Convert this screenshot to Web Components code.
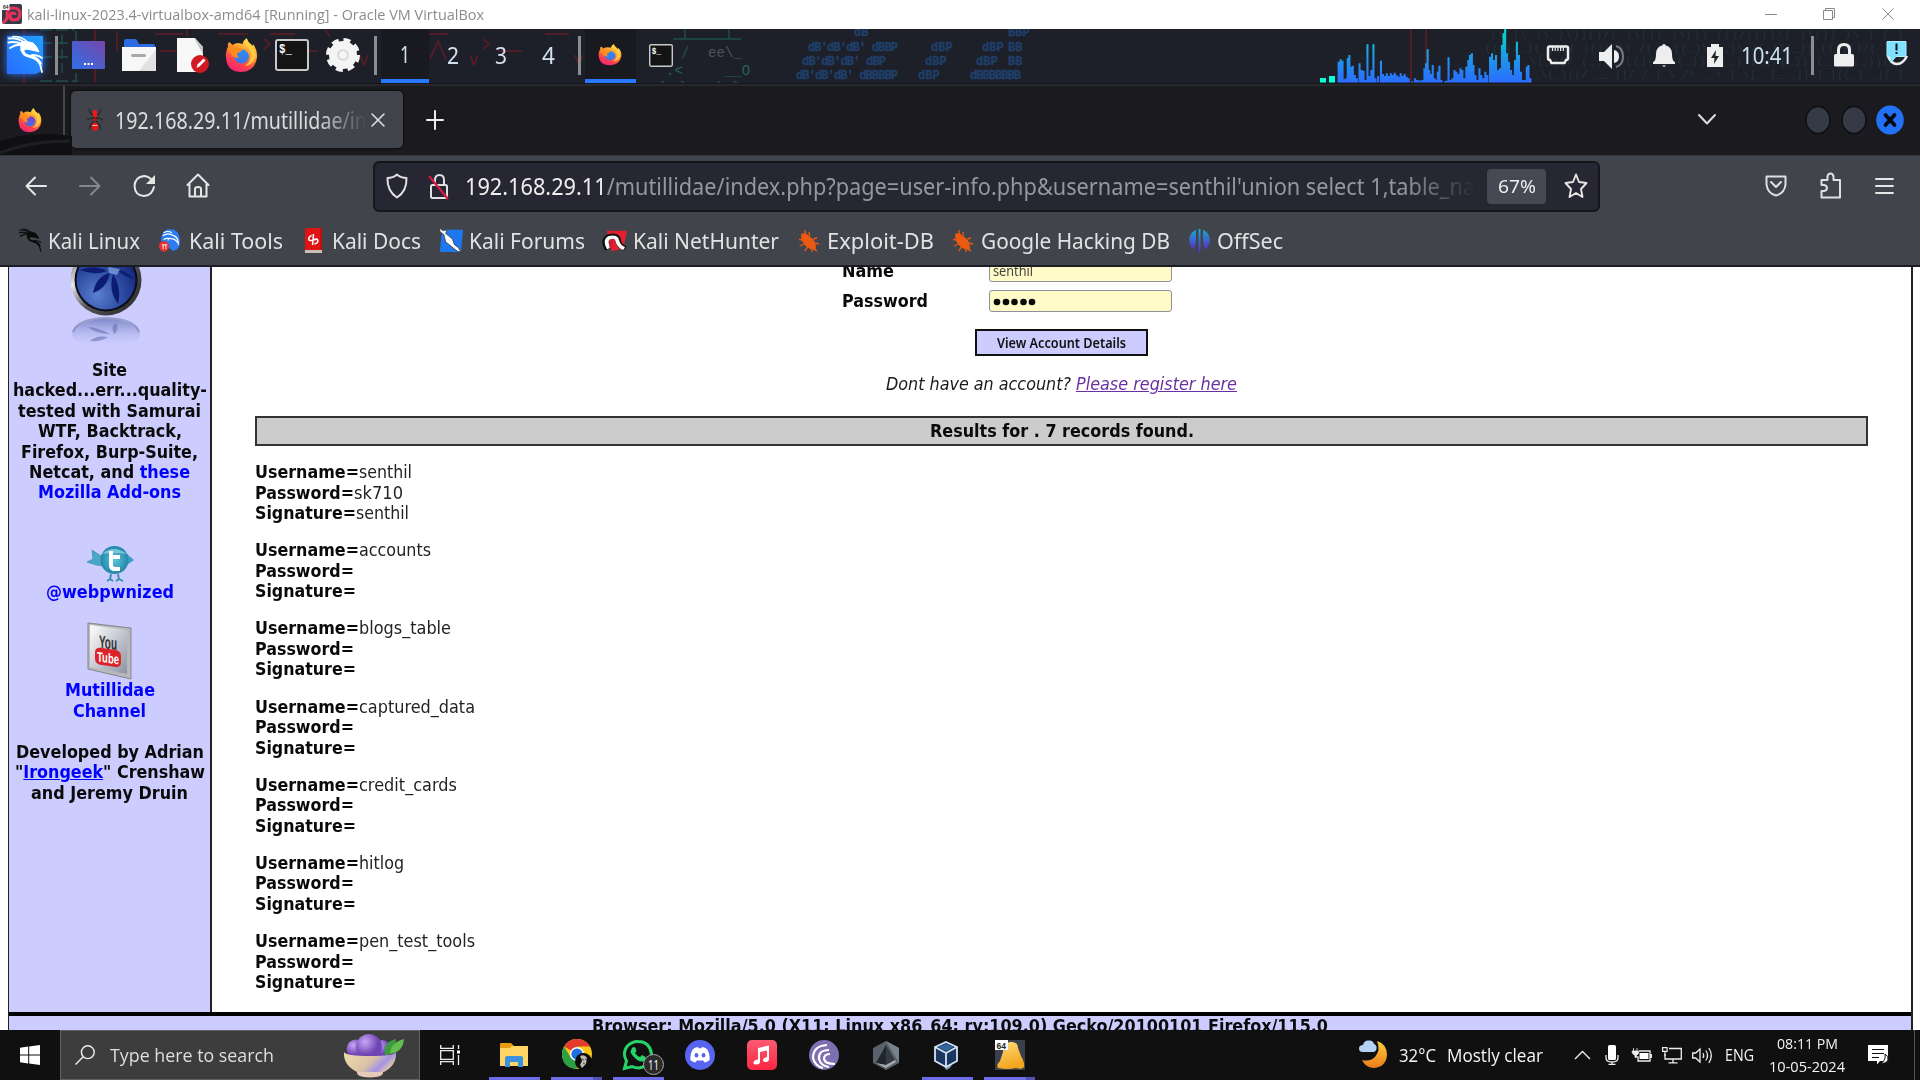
<!DOCTYPE html>
<html lang="en">
<head>
<meta charset="utf-8">
<title>kali-linux-2023.4-virtualbox-amd64 [Running] - Oracle VM VirtualBox</title>
<style>
html,body{margin:0;padding:0;width:1920px;height:1080px;overflow:hidden;background:#fff}
</style>
</head>
<body>
<vm-desktop></vm-desktop>
<script>
const FOX = `<defs><linearGradient id="a" x1=".8" y1="0" x2=".3" y2="1"><stop offset="0" stop-color="#fff04a"/><stop offset=".4" stop-color="#ff9a2c"/><stop offset=".75" stop-color="#ff3f4d"/><stop offset="1" stop-color="#f0247a"/></linearGradient><linearGradient id="b" x1="0" y1="0" x2="0" y2="1"><stop offset="0" stop-color="VAR"/><stop offset="1" stop-color="#3d74e8"/></linearGradient></defs>
<path fill="url(#a)" d="M3 9Q2 6 4 4q2 1 3 3 3-2 6-2l4 1Q18 2 21 0q1 4 5 7l1 1V6q5 6 4 14-2 13-15 14Q2 34 1 20 0 13 3 9Z"/>
<circle cx="16" cy="18.500" r="7.200" fill="url(#b)"/><path fill="#ff8d1c" d="M2 10q3-3 7-1 4 1 8 2-1 3-5 4-1 3 2 5-6 0-8-4Z"/><path fill="#ffcf44" opacity=".85" d="M19 2q0 5 4 8 3 4 2 9-1 6-6 9 10-1 11-11-1-6-5-10-4-2-6-5Z"/>`;
const DRAGON = `<g fill="none" stroke="FILL" stroke-linecap="round" stroke-linejoin="round"><path stroke-width="2" d="M3 3.500Q10 2 18 7M2.500 7.500Q9 6 16 9M4 13q6-4 12-3"/><path stroke-width="1.500" d="M7 1.500q9 0 14 5"/><path fill="FILL" stroke-width="1" d="M16 6.500q6-.5 11 1.500 4 3 6 9l-3-1-7-1.500q-5-1-5.500 2L15 16q-1-6 1-9.500Z"/><path stroke-width="3" d="M16.300 14q0 6 8 7.500 7 1.500 10 7"/><path stroke-width="1.800" d="M24 21q8 2 10 8l2 8M26 20q6 0 10 3"/></g>`;
const TERM = `<rect x="1" y="1" width="32" height="30" rx="2" fill="#141414" stroke="#c9c9c9" stroke-width="2"/><text x="4" y="14" font-family="Liberation Mono" font-weight="bold" font-size="12" textLength="13" lengthAdjust="spacingAndGlyphs" fill="#fff">$_</text>`;
const BUG = `<g transform="translate(1 1)"><path d="M3 4q4-1 7 2l5 4q3 4 2 9l2 2-5-2q-6-1-9-6-3-4-2-9Z" fill="#ec5a12" stroke="#ec5a12"/><path d="M7 4L6 0M11 6l-.5-4M15 9l4-1M17 13l4 1M4 10l-4-.5M6 14l-5 2M9 17l-3 4M13 19l1 3" stroke="#ec5a12" stroke-width="1.300" fill="none"/></g>`;
const L='fill="none" stroke-linecap="round" stroke-linejoin="round"';
const ICONS = {
vbox:['0 0 20 20',`<rect width="20" height="20" rx="2" fill="#363b48"/><path d="M1 19Q7 14 5 10 5 4 11 4q7 0 7 6 0 6-6 6-4 0-4-4 0-3 3-3 2 0 2 2" fill="none" stroke="#e8315a" stroke-width="3.2"/><rect width="7.500" height="6" fill="#fff"/><text x="1" y="5" font-size="5" font-weight="bold" font-family="Liberation Sans" fill="#222">64</text>`],
kali:['0 0 38 40',`<defs><linearGradient id="g" x1="0" y1="1" x2="1" y2="0"><stop offset="0" stop-color="#2a6cff"/><stop offset="1" stop-color="#20a0ff"/></linearGradient></defs><path d="M1 1h36v30q-2 8-10 8H1Z" fill="url(#g)"/>`+DRAGON.replaceAll('FILL','#fff')],
desk:['0 0 33 28',`<defs><linearGradient id="g" x1="0" y1="1" x2="1" y2="0"><stop offset="0" stop-color="#2e70ea"/><stop offset="1" stop-color="#7746a8"/></linearGradient></defs><rect width="33" height="28" rx="1" fill="url(#g)"/><path d="M12 23h2m1.500 0h2m1.500 0h2" stroke="#fff" stroke-width="2"/>`],
folder:['0 0 34 32',`<path d="M2 12V2q0-2 2-2h9q2 0 3 3l1 2h14q2 0 2 2v5Z" fill="#2c6be4"/><path d="M0 8h34v24H0Z" fill="#f7f7f7"/><path d="M34 10v22H17Z" fill="#e2e2e2"/><rect x="9" y="15" width="15" height="3" rx="1.500" fill="#a9a9a9"/>`],
doc:['0 0 32 35',`<path d="M0 0h18l8 9v25H0Z" fill="#f8f8f8"/><path d="M17 0l9 16v-7Z" fill="#c2c2c2"/><circle cx="23" cy="26" r="9" fill="#d01a22"/><path d="M19.500 30l1-3.500 6-6 2 2-6 6Z" fill="#fff"/>`],
fox:['0 0 32 35',FOX.replace('VAR','#2f8ef0')],
foxv:['0 0 32 35',FOX.replace('VAR','#8a35d8')],
term:['0 0 34 32',TERM],
gear:['0 0 34 36',`<circle cx="17" cy="18" r="9.500" fill="none" stroke="#f4f4f4" stroke-width="9"/><circle cx="17" cy="18" r="14" fill="none" stroke="#f4f4f4" stroke-width="6" stroke-dasharray="6.500 4.500"/><circle cx="17" cy="18" r="5" fill="#f4f4f4" stroke="#cfcfcf" stroke-width="1.200"/>`],
eth:['0 0 22 20',`<path d="M2.500 1.500h17q1.500 0 1.500 1.500v10q0 2-2 2l-1.500 3h-13L3 15q-2 0-2-2V3q0-1.500 1.500-1.500Z" fill="none" stroke="#eee" stroke-width="2.500"/><path d="M5.500 2v4m2.700-4v4m2.700-4v4m2.700-4v4m2.700-4v4" stroke="#eee" stroke-width="1.200"/>`],
vol:['0 0 27 25',`<path d="M0 8h5l8-8v25l-8-8H0Z" fill="#eee"/><path d="M15 6q5 1 5 6.500T15 19Z" fill="#eee"/><path d="M17 2q7 2 7 10.500T17 23" fill="none" stroke="#777c84" stroke-width="2"/>`],
bell:['0 0 22 23',`<path d="M11 0q1.500 0 1.800 1.500Q19 3 19 10q0 7 3 8v2H0v-2q3-1 3-8 0-7 6.200-8.500Q9.500 0 11 0ZM9 21.500h4l-2 1.500Z" fill="#eee"/>`],
bat:['0 0 16 23',`<path d="M4 0h8v3h4v20H0V3h4Z" fill="#eee"/><path d="M9 6l-5 8h3.500L7 20l5-8H8.500Z" fill="#20222c"/>`],
lock:['0 0 20 24',`<path d="M4.500 12V7q0-5.500 5.500-5.500T15.500 7v5" fill="none" stroke="#eee" stroke-width="3"/><rect y="11" width="20" height="12.500" rx="1.500" fill="#eee"/>`],
msg:['0 0 24 25',`<path d="M3 15q3 8 9 8 6 0 10-8" fill="none" stroke="#eee" stroke-width="2.500"/><path d="M2 .5h19v15h-10l-5 6-1-6H2Z" fill="#7fe0ff" stroke="#aaf0ff"/><path d="M11.500 2.500v7m0 1.500v2" stroke="#111" stroke-width="2"/>`],
min:['0 0 12 12',`<path d="M0 6.500h12" stroke="#8a8a8a"/>`],
restore:['0 0 12 12',`<path d="M.5 2.500h9v9h-9ZM2.500 2.500v-2h9v9h-2" fill="none" stroke="#8a8a8a"/>`],
close:['0 0 12 12',`<path d="M.5.500l11 11m0-11l-11 11" stroke="#8a8a8a"/>`],
ant:['0 0 18 24',`<path d="M3 1l2 5 3 2m7-7l-2 5-3 2M1 12l4-2h8l4 2M3 22l2-6 3-3m7 9l-2-6-3-3" fill="none" stroke="#1c1c1f" stroke-width="1"/><rect x="7" y="2" width="4" height="7" rx="1.500" fill="#f11"/><circle cx="9" cy="11.500" r="1.800" fill="#b11"/><path d="M9 14.500q4 .5 3.500 5-1.500 3.500-3.500 3.500t-3.500-3.500q-.5-4.500 3.500-5Z" fill="#e01616"/><path d="M6.500 17.500h5" stroke="#fbb" stroke-width="1"/>`],
x:['0 0 14 14',`<path d="M1 1l12 12M13 1L1 13" ${L} stroke="#ddd" stroke-width="1.600"/>`],
plus:['0 0 18 20',`<path d="M9 1v18M1 10h16" ${L} stroke="#eee" stroke-width="2"/>`],
chev:['0 0 18 11',`<path d="M1 1l8 8.500L17 1" ${L} stroke="#ddd" stroke-width="2"/>`],
wdot:['0 0 26 28',`<ellipse cx="13" cy="14" rx="12" ry="13.500" fill="#363a46" stroke="#0e0f12" stroke-width="1.500"/>`],
wclose:['0 0 28 30',`<ellipse cx="14" cy="15" rx="13.800" ry="14.600" fill="#2372f5"/><path d="M9.500 10l9 10m0-10l-9 10" stroke="#0a0a12" stroke-width="3.800" stroke-linecap="round"/>`],
back:['0 0 22 20',`<path d="M21 10H1.500M10 1.500L1.500 10l8.500 8.500" ${L} stroke="#e6e6e6" stroke-width="2"/>`],
fwd:['0 0 22 20',`<path d="M1 10h19.500M12 1.500l8.500 8.500-8.500 8.500" ${L} stroke="#85878c" stroke-width="2"/>`],
reload:['0 0 23 24',`<path d="M18.500 5.500Q15 2 11 2 2 3 1.500 12 2 21.500 11 22q8-.5 10-9" ${L} stroke="#e6e6e6" stroke-width="2"/><path d="M22 1v9h-9Z" fill="#e6e6e6"/>`],
home:['0 0 24 25',`<path d="M1.500 12L12 1.500 22.500 12M3.500 11v12.500h17V11M9 23v-7q0-2 3-2t3 2v7" ${L} stroke="#e6e6e6" stroke-width="2"/>`],
shield:['0 0 22 26',`<path d="M11 1.500q4 3.500 9.500 3.500.5 13-9.500 19.500Q1 18 1.500 5 7 5 11 1.500Z" ${L} stroke="#e0e0e0" stroke-width="2"/>`],
nolock:['0 0 22 27',`<path d="M7 12V7q0-5 4.500-5T16 7v5" ${L} stroke="#e0e0e0" stroke-width="2"/><rect x="3" y="12" width="16" height="13" rx="1.500" ${L} stroke="#e0e0e0" stroke-width="2"/><path d="M1 3l19 23" stroke="#d41b45" stroke-width="2.300"/>`],
star:['0 0 24 26',`<path d="M12 1.500l3 7.500 7.500 1-5.500 6 1.500 8-6.500-4-6.500 4L7 16 1.500 10 9 9Z" ${L} stroke="#e6e6e6" stroke-width="1.900"/>`],
pocket:['0 0 22 22',`<path d="M1.500 1.500h19v8q-1 9-9.500 11-8.500-2-9.500-11ZM6 7l5 5 5-5" ${L} stroke="#e0e0e0" stroke-width="2"/>`],
puzzle:['0 0 22 27',`<path d="M1.500 8h6V4.500Q8 1.500 10.500 1.500t3 3V8h6.500v17.500H1.500V19H4q3-.5 3-3t-3-3H1.500Z" ${L} stroke="#e0e0e0" stroke-width="2"/>`],
menu:['0 0 19 18',`<path d="M1 2h17M1 9h17M1 16h17" ${L} stroke="#e6e6e6" stroke-width="1.900"/>`],
bkali:['0 0 38 40',DRAGON.replaceAll('FILL','#0b0b0b')],
btools:['0 0 24 26',`<path d="M12 1q10 0 11 12 0 10-8 11L2 13Q3 1 12 1Z" fill="#2c7cf2"/><path d="M4 8q6-4 12 0 5 2 5 8-3-5-8-5-3-1-3 2M5 5q5-3 9 0M5 12q3-2 6-1" fill="none" stroke="#fff" stroke-width="1.300"/><circle cx="5.500" cy="19" r="5.600" fill="#e8302e"/><path d="M3 17.500h6M4.500 17.500V22m3-4.500V22" stroke="#fff"/>`],
bdocs:['0 0 20 26',`<path d="M1 3q0-3 3-3h15v22H1Z" fill="#e01414"/><path d="M1 22h18v3H1Z" fill="#c9c0b8"/><path d="M8 7.500q-3 1-3 3.500t5 1q4-2 4.500.5T11 16M10 6l-1 11" fill="none" stroke="#fff" stroke-width="1.600"/><path d="M18 0v22" stroke="#b01010" stroke-width="1.500"/>`],
bforum:['0 0 26 27',`<path d="M3 2h22l-2 24H1Z" fill="#1e77ee"/><path d="M1 0l3 3 4-1-1 4 7 6 2 6 4 3 3 5-4-1-6-5-6-5-2-8-4-3Z" fill="#fff" stroke="#333" stroke-width=".8"/>`],
bnet:['0 0 26 27',`<path d="M4 2h21l-4 21-12 3Z" fill="#e3202e"/><path d="M5 24Q-1 13 6 9q9-3 10 5 0 5 7 9" fill="none" stroke="#111" stroke-width="6"/><path d="M6 23Q1 13 7 10q7-2 8 4 1 6 7 9" fill="none" stroke="#fff" stroke-width="4"/><path d="M8 22q-1-7 2-8" fill="none" stroke="#d31836" stroke-width="2.500"/>`],
bug:['0 0 22 24',BUG],
boff:['0 0 23 28',`<defs><linearGradient id="g" x1="0" y1="0" x2="0" y2="1"><stop offset="0" stop-color="#1aa7c8"/><stop offset="1" stop-color="#5b2bd0"/></linearGradient></defs><path d="M8 2q-7 4-7 12 1 7 5 10l2-9Zm7 0q7 4 7 12-1 7-5 10l-2-9Z" fill="url(#g)"/><path d="M10.500 1v24l1 3 1-3V1Z" fill="url(#g)"/>`],
logo:['0 0 80 83',`<defs><linearGradient id="m" x1="0" y1="0" x2="1" y2="1"><stop offset="0" stop-color="#333"/><stop offset=".3" stop-color="#e8e8e8"/><stop offset=".55" stop-color="#555"/><stop offset="1" stop-color="#222"/></linearGradient><radialGradient id="n" cx=".35" cy=".75" r=".9"><stop offset="0" stop-color="#5b7fd0"/><stop offset=".5" stop-color="#2b49a0"/><stop offset="1" stop-color="#0a1766"/></radialGradient><linearGradient id="r" x1="0" y1="0" x2="0" y2="1"><stop offset="0" stop-color="#6675b8" stop-opacity=".75"/><stop offset="1" stop-color="#ccccff" stop-opacity="0"/></linearGradient></defs>
<circle cx="40" cy="13" r="35.500" fill="url(#m)"/><circle cx="40" cy="13" r="31.500" fill="#0a0c1c"/><circle cx="40" cy="13" r="29.500" fill="url(#n)"/><path d="M44 6q-14 3-17 20 14-5 17-20Zm3 1q-5 16 5 30 4-16-5-30ZM41 4Q28-3 14 3q14 6 27 1Zm10-1q9 0 17 9-9-2-17-9Z" fill="#0c1c72"/><path d="M42 0l12 2-3 6-8-2Z" fill="#7c9cdc" opacity=".8"/><ellipse cx="40" cy="67" rx="34" ry="15" fill="url(#r)"/><path d="M7 65q4-13 33-14 29 1 33 14" fill="none" stroke="#777aa8" stroke-width="2" opacity=".6"/><path d="M44 67q-10-6-22-7 8 7 22 7Zm4 0q-4-8 2-11 4 7-2 11ZM42 70q-12-2-18 4 11 1 18-4Z" fill="#6672b0" opacity=".6"/>`],
bird:['0 0 48 37',`<defs><radialGradient id="g"><stop offset="0" stop-color="#5bc6dd"/><stop offset="1" stop-color="#2487ab"/></radialGradient></defs><path d="M6 5l12 8-1 8q-9-1-16-4l6-3Z" fill="#4aa7c6" stroke="#2f8fae" stroke-width=".7"/><path d="M41 9l7 6-7 5Z" fill="#3a9fc0"/><path d="M25 29l-1 6m-3 1l3-2 3 2m5-7l1 6m-3 1l3-2 4 2" fill="none" stroke="#2f8fae" stroke-width="1.800"/><circle cx="28.500" cy="15" r="14" fill="url(#g)"/><path d="M16 9q11-10 25 0-12-2-25 0Z" fill="#a5e2ee" opacity=".6"/><path d="M25 6v14q0 4 4 4h5M25 12h9" fill="none" stroke="#fff" stroke-width="4"/>`],
yt:['0 0 45 57',`<defs><linearGradient id="g" x1="0" y1="0" x2="1" y2="1"><stop offset="0" stop-color="#fff"/><stop offset="1" stop-color="#8c93a2"/></linearGradient></defs><path d="M1 1l43 5v51L1 47Z" fill="#b9b9bd" stroke="#85858c"/><path d="M3 3l37 5v44L3 45Z" fill="url(#g)"/><g transform="skewY(8)"><text x="12" y="24" font-family="Liberation Sans Narrow,Liberation Sans" font-weight="bold" font-size="18" textLength="18" lengthAdjust="spacingAndGlyphs" fill="#333">You</text><rect x="8" y="24" width="26" height="17" rx="5" fill="#dd2229"/><text x="10" y="38" font-family="Liberation Sans" font-weight="bold" font-size="14" textLength="22" lengthAdjust="spacingAndGlyphs" fill="#fff">Tube</text></g>`],
win:['0 0 20 20',`<path d="M0 2.800l8.200-1.200v7.900H0Zm9.200-1.300L20 0v9.500H9.200ZM0 10.500h8.200v7.900L0 17.200Zm9.200 0H20V20L9.200 18.500Z" fill="#fff"/>`],
search:['0 0 20 20',`<circle cx="12.800" cy="7.200" r="6.400" fill="none" stroke="#eee" stroke-width="1.400"/><path d="M8.200 11.800L.5 19.500" stroke="#eee" stroke-width="1.400"/>`],
bowl:['0 0 60 44',`<defs><radialGradient id="p" cx=".35" cy=".3"><stop offset="0" stop-color="#c8a8f4"/><stop offset="1" stop-color="#6f45b4"/></radialGradient><linearGradient id="q" x1="0" y1="0" x2="1" y2=".4"><stop offset="0" stop-color="#efdcab"/><stop offset=".6" stop-color="#d9c2a6"/><stop offset=".85" stop-color="#a493e6"/><stop offset="1" stop-color="#d9bfae"/></linearGradient></defs><circle cx="12" cy="15" r="9.500" fill="url(#p)"/><circle cx="38" cy="15" r="9" fill="url(#p)"/><path d="M41 21Q38 8 52 5q0 12-8 16Z" fill="#3d9b3f"/><path d="M46 20q0-11 14-15-1 13-14 15Z" fill="#62bf4e"/><circle cx="25" cy="13" r="13" fill="url(#p)"/><path d="M0 18q2 4 26 4t26-4q1 13-12 20H13Q-1 31 0 18Z" fill="url(#q)"/><path d="M13 38h26q1 5-13 5.500Q12 43 13 38Z" fill="#e7c9b8"/>`],
task:['0 0 20 20',`<path d="M.7 0v3.300h12.600V0M.7 20v-3.300h12.600V20M.7 5.700h12.600v8.600H.7Z" fill="none" stroke="#eee" stroke-width="1.300"/><path d="M18.500 0v4m0 6v10" stroke="#eee" stroke-width="1.300"/><rect x="17" y="5.500" width="3" height="3" fill="#fff"/>`],
files:['0 0 28 24',`<path d="M0 1q0-1 1-1h10l3 3v6H0Z" fill="#e79c12"/><path d="M0 5h10l2-2h16v20H0Z" fill="#ffd565"/><path d="M5 24V15q0-2 2-2h14q2 0 2 2v9h-5v-5h-8v5Z" fill="#3a92dc"/>`],
chrome:['0 0 30 32',`<circle cx="15" cy="15" r="15" fill="#fbc618"/><path d="M15 15L2 7.500Q6 0 15 0t13 7.500H15Z" fill="#e33b2e"/><path d="M2 7.500L9 19l6 3v8Q0 29 0 15 0 11 2 7.500Z" fill="#2b9e46"/><circle cx="15" cy="15" r="7" fill="#fff"/><circle cx="15" cy="15" r="5.600" fill="#1f6fe0"/><circle cx="21.500" cy="22.500" r="8.500" fill="#0b0b0b"/><path d="M18 17q5-2 7 2l-1 6-4 4-2-3 2-4Z" fill="#bdb8b0"/><path d="M19 20l3 1m1-1l2 1m-4 3l2 1" stroke="#444"/>`],
wa:['0 0 41 35',`<path d="M1.500 28.500l2-7.500Q-1 13 4 6.500 9 1 15.500 1.500 27 2 28.500 14 28 26 16 28q-4 0-7-1.500Z" fill="#101010" stroke="#25d366" stroke-width="3"/><path d="M9 8q2-2 3.500 0l1 3-1.500 2q2 3 5 4l2-2 3.500 2q1 3-3 4.500-4 .5-8-4-4-4-4-6Z" fill="#25d366"/><circle cx="30.500" cy="24.500" r="10" fill="#2a2a2a" stroke="#a5a5a5"/><text x="30.500" y="30" text-anchor="middle" font-family="Open Sans" font-size="15" textLength="11" lengthAdjust="spacingAndGlyphs" fill="#fff">11</text>`],
discord:['0 0 30 30',`<circle cx="15" cy="15" r="15" fill="#5865f2"/><path d="M8 9q3-2 5-2l.7 1.200h2.600L17 7q2 0 5 2 3 5 2.700 11-3 2.300-5.200 2.500L18.200 20.500h-6.400L10.500 22.500Q8 22.300 5.300 20 5 14 8 9Z" fill="#fff"/><ellipse cx="11.500" cy="15.300" rx="1.900" ry="2.200" fill="#5865f2"/><ellipse cx="18.500" cy="15.300" rx="1.900" ry="2.200" fill="#5865f2"/>`],
music:['0 0 30 30',`<defs><linearGradient id="g" x1="0" y1="0" x2="0" y2="1"><stop offset="0" stop-color="#fc5b73"/><stop offset="1" stop-color="#fa2741"/></linearGradient></defs><rect width="30" height="30" rx="5" fill="url(#g)"/><path d="M11 8l11-2.500v13.500q0 3-3 3t-3-2 4-3V10.500l-7 1.500v9.500q0 3-3.500 3t-3-2.300Q7 20 11 19.500Z" fill="#fff"/>`],
bt:['0 0 30 30',`<circle cx="15" cy="15" r="15" fill="#7d6fb0"/><path d="M18 5Q4 6 4 18q2 8 10 10M20 10q-11 0-10 9 2 7 10 8M21 14q-6 0-6 5 1 5 11 5" fill="none" stroke="#fff" stroke-width="2.200"/>`],
hex:['0 0 26 29',`<path d="M13 0l13 7v15l-13 7L0 22V7Z" fill="#59616a"/><path d="M13 0l13 7v15L13 0Z" fill="#78828b"/><path d="M13 4L3 22l10 2Z" fill="#20262c"/><path d="M13 4l9 15-9 5Z" fill="#343b42"/><path d="M3 22l10 2 9-5 1 2-10 6Z" fill="#a2abb2"/>`],
vb:['0 0 24 29',`<path d="M7 19l5 10q7-2 6-10Z" fill="#7f95b4"/><path d="M12 1l11 5v14l-11 6L1 20V6Z" fill="#18365f" stroke="#d4e2f2" stroke-width="1.800"/><path d="M1 6l11 6 11-6M12 12v14" fill="none" stroke="#d4e2f2" stroke-width="1.800"/><path d="M12 3l8 3-8 4-8-4Z" fill="#31669f"/>`],
vm:['0 0 30 30',`<defs><linearGradient id="g" x1="0" y1="0" x2=".3" y2="1"><stop offset="0" stop-color="#ffdc78"/><stop offset="1" stop-color="#f3a51e"/></linearGradient></defs><rect width="30" height="30" fill="#3a3f4b"/><path d="M3 28q-2-3 2-7l3-9q0-9 7-10 8-1 8 6l3 8q4 7 3 11-2 3-8 1-8 2-18 0Z" fill="url(#g)"/><rect width="13" height="10" fill="#fff"/><text x="1.500" y="8.500" font-family="Liberation Sans" font-weight="bold" font-size="8.500" fill="#222">64</text>`],
moon:['0 0 28 29',`<defs><linearGradient id="g" x1="0" y1="0" x2="0" y2="1"><stop offset="0" stop-color="#fbcf3c"/><stop offset="1" stop-color="#ee7a1b"/></linearGradient></defs><path d="M18 1q10 3 10 14-1 12-13 13-8 0-12-8 8 2 13-3 6-7 2-16Z" fill="url(#g)"/><path d="M4 12q-4 0-4-3.500Q0 5 4 5q1-5 6-4.500Q14 0 15 4q3 1 2.500 4.500T14 12Z" fill="#b5d2f4"/>`],
up:['0 0 17 10',`<path d="M1 9l7.500-7.500L16 9" fill="none" stroke="#eee" stroke-width="1.400"/>`],
mic:['0 0 14 20',`<rect x="3" width="8" height="15" rx="1.500" fill="#fff"/><path d="M1 10v3q0 4 6 4t6-4v-3M7 17v2.300M3.500 19.300h7" fill="none" stroke="#eee" stroke-width="1.300"/>`],
wbat:['0 0 20 14',`<path d="M7.500 5h9v6h-9Z" fill="#fff"/><path d="M7 3h11v10H6V8M19.300 6v4" fill="none" stroke="#eee" stroke-width="1.300"/><path d="M1.500 0v3M5 0v3M0 3h6.500v2.500L4.500 7.500v2H3v-2L.6 5.500Z" fill="#eee" stroke="#eee" stroke-width=".8"/>`],
net:['0 0 20 17',`<path d="M7 1.500h12.300v10.500H3V7M11 12v3.500M6.500 15.800h9" fill="none" stroke="#eee" stroke-width="1.300"/><path d="M.6.600h4.500v3.800H.6ZM3 4.500V9" fill="none" stroke="#eee" stroke-width="1.200"/>`],
wvol:['0 0 21 17',`<path d="M.7 6h3L8 2v13l-4.300-4h-3Z" fill="none" stroke="#eee" stroke-width="1.300"/><path d="M11 6q1.500 2.500 0 5M13.800 3.500q3.500 5 0 10M16.800 1q5 7.500 0 15" fill="none" stroke="#eee" stroke-width="1.200"/>`],
note:['0 0 21 20',`<path d="M0 0h20v16h-8l-3 3.500V16H0Z" fill="#fff"/><path d="M4 4.500h12M4 8.500h12M4 12.500h7" stroke="#101010" stroke-width="1.200"/><path d="M17 9q4 2 3 6-2 4-7 3 5-2 4-9Z" fill="#fff" stroke="#101010"/>`]
};
const def=(n,html,extra)=>{const t=document.createElement('template');t.innerHTML=html;
 customElements.define(n,class extends HTMLElement{constructor(){super();this.attachShadow({mode:'open'}).append(t.content.cloneNode(true));}
 connectedCallback(){extra&&extra(this);}});};

/* u-icon: inline drawing. n = name, w/h = size, m = left margin, t = vertical nudge */
def('u-icon','<style>:host{display:block;flex:none}svg{display:block;width:100%;height:100%;overflow:visible}</style><div style="height:100%"></div>',e=>{
 const [vb,s]=ICONS[e.getAttribute('n')],v=vb.split(' ');
 e.style.width=(e.getAttribute('w')||v[2])+'px';e.style.height=(e.getAttribute('h')||v[3])+'px';
 e.style.marginLeft=(e.getAttribute('m')||0)+'px';
 if(e.hasAttribute('t'))e.style.marginTop=e.getAttribute('t')+'px';
 e.shadowRoot.querySelector('div').innerHTML=`<svg viewBox="${vb}" preserveAspectRatio="none">${s}</svg>`;
});
/* fit-text: one line of text condensed or widened to w pixels */
def('fit-text','<style>:host{display:block;flex:none;white-space:pre}span{display:inline-block;transform-origin:0 50%}</style><span><slot></slot></span>',e=>{
 const s=e.shadowRoot.querySelector('span'),w=+e.getAttribute('w');
 e.style.marginLeft=(e.getAttribute('m')||0)+'px';
 if(e.hasAttribute('s'))e.style.fontSize=e.getAttribute('s')+'px';
 const n=s.getBoundingClientRect().width;
 e.style.width=w+'px';
 if(n)s.style.transform=`scaleX(${w/n})`;
});

def('title-bar',`<style>:host{display:flex;height:29px;background:#fff;align-items:center;color:#8b8b8b;font:15px "Open Sans",sans-serif;box-sizing:border-box;padding-bottom:1px}</style>
<u-icon n="vbox" m="2" t="-1"></u-icon><fit-text w="457" m="5">kali-linux-2023.4-virtualbox-amd64 [Running] - Oracle VM VirtualBox</fit-text>
<u-icon n="min" m="1281"></u-icon><u-icon n="restore" m="46"></u-icon><u-icon n="close" m="47"></u-icon>`);

def('net-graph','<style>:host{display:block;flex:none;width:212px;height:54px;margin:2px 0 0 647px}svg{display:block}</style><div></div>',e=>{
 const d=[97,185,102,178,107,182,112,237,117,235,120,175,124,165,128,200,133,197,138,225,143,235,150,190,155,210,160,212,165,240,170,133,175,228,180,210,185,133,190,235,197,228,204,182,209,222,214,228,219,220,224,228,229,220,234,225,239,218,244,226,249,230,254,220,259,228,264,222,269,230,274,235,283,244,290,235,295,240,300,241,306,241,311,240,314,205,318,190,322,148,326,210,331,222,335,195,340,235,345,240,348,215,352,197,357,240,367,243,371,242,375,172,380,240,385,235,390,210,395,215,400,222,405,205,410,210,415,235,420,200,425,180,429,165,434,160,438,195,443,225,448,240,453,205,458,225,463,235,468,215,473,225,480,170,485,160,490,180,495,165,500,210,505,205,510,135,514,100,518,87,523,160,528,185,533,210,538,225,543,180,548,125,553,165,558,215,563,240,568,240,573,200,577,195,582,235];
 let p='';for(let i=0;i<d.length;i+=2){const x=(d[i]-50)/2.529-1,y=d[i+1]/3-29;p+=`M${x.toFixed(1)} 53.500V${y.toFixed(1)}h2.100V53.500Z`;}
 e.shadowRoot.querySelector('div').innerHTML=`<svg width="212" height="54"><defs><linearGradient id="g" gradientUnits="userSpaceOnUse" x1="0" y1="0" x2="0" y2="54"><stop offset="0" stop-color="#00e0c4"/><stop offset=".45" stop-color="#1c9fe4"/><stop offset="1" stop-color="#2a6cff"/></linearGradient></defs><path d="M0 49h6v4.500H0ZM9 47h6v6.500H9Z" fill="#0affd8"/><path d="${p}" fill="url(#g)"/></svg>`;
});

def('kali-panel',`<style>:host{display:flex;position:relative;box-sizing:border-box;height:54px;padding-bottom:2px;background:#1e2029;align-items:center;font:23px "Noto Sans",sans-serif;color:#cfe0ee;overflow:hidden}
.bg{position:absolute;left:0;top:0;z-index:0}u-icon,fit-text,i,b,net-graph{z-index:1}
i{flex:none;width:3px;height:39px;background:#8c8d92;margin-top:1px}
b{flex:none;height:54px;box-sizing:border-box;border-bottom:4px solid #2777ff;background:#191a20;display:flex;align-items:center;font-weight:400;margin-top:2px;padding-bottom:1px}
.k{filter:drop-shadow(0 0 4px #2a78ff)}</style>
<svg class="bg" width="1920" height="54" fill="none"><g stroke="#611b25" stroke-width="1.500"><path d="M24 0v54M95 0v54M117 2v20M155 5h28M187 0v8M218 5h30M270 5h25M160 22h30m100 0h28M420 5h28M545 5h24M498 22h24M618 0v54M1411 0v54M1426 0v54M325 0l5 8M430 30l8-18 8 18M264 10l6 5-6 5M483 10l6 5-6 5M586 10l5 5-5 5M360 26l4 10 4-10M415 26l4 10 4-10M470 26l4 10 4-10M575 26l4 10 4-10"/></g>
<g stroke="#1e4d4b" stroke-width="1.500"><path d="M40 1h35M40 14h35M40 28h35M40 52h38" stroke-dasharray="12 4"/><path d="M76 2v50M62 6v42" stroke-dasharray="10 4"/><path d="M673 10h68M685 0v10M729 0v10M682 30l6-13M661 54l3-2M681 52l3 2M719 52v2M734 52l3 2"/></g>
<g font-family="Liberation Mono" font-size="14"><g fill="#25605a"><text x="666" y="46">.&lt;</text><text x="725" y="46">__O</text></g><text x="708" y="28" fill="#505258" textLength="34">ee\\_</text></g>
<g font-family="Liberation Mono" font-weight="bold" font-size="12" fill="#1f3f69" stroke="#1f3f69" stroke-width=".4"><text x="854" y="7">dB</text><text x="1008" y="7">BBP</text><text x="808" y="22" textLength="90">dB'dB'dB' dBBP</text><text x="931" y="22">dBP</text><text x="982" y="22">dBP</text><text x="1008" y="22">BB</text><text x="802" y="36" textLength="84">dB'dB'dB' dBP</text><text x="925" y="36">dBP</text><text x="976" y="36">dBP</text><text x="1008" y="36">BB</text><text x="796" y="50" textLength="102">dB'dB'dB' dBBBBP</text><text x="918" y="50">dBP</text><text x="970" y="50" textLength="51">dBBBBBBB</text></g>
<g font-family="Liberation Mono" font-size="10.500" fill="#20353f" xml:space="preserve"><text x="1490" y="9" textLength="414">)\\   )\\      )\\   )\\))()/(    )\\()) )\\()) (()/((()/(  )\\()) )\\ ) [ ]</text><text x="1485" y="23" textLength="419">((  ((_)( (_)( |()(_)\\  /(_) ((_)\\ (_)\\ /(_))(_)) ((_)()/( ] [</text><text x="1530" y="36" textLength="374">\\(_)(/  (_)_\\ (()(_) (_)) ((_) (_)/(_)) (_)\\ (_))(_)</text><text x="1534" y="49" textLength="370">_\\(_)((/ __ ||/ / | \\ /\\ _ \\ | \\|_ |_ _||\\| |((_) _|[ ]</text></g></svg>
<u-icon class="k" n="kali" m="6"></u-icon><i style="margin-left:11px"></i><u-icon n="desk" m="14"></u-icon><u-icon n="folder" m="17"></u-icon><u-icon n="doc" m="21"></u-icon><u-icon n="fox" m="16" w="33"></u-icon><u-icon n="term" m="17"></u-icon><u-icon n="gear" m="17"></u-icon>
<i style="margin-left:14px"></i><b style="width:48px;margin-left:4px"><fit-text w="10" m="19">1</fit-text></b><fit-text w="12" m="18">2</fit-text><fit-text w="12" m="36">3</fit-text><fit-text w="13" m="35">4</fit-text><i style="margin-left:23px"></i><b style="width:51px;margin-left:4px"><u-icon n="fox" w="24" h="22" m="13" t="3"></u-icon></b><u-icon n="term" w="24" h="23" m="13"></u-icon>
<net-graph></net-graph>
<u-icon n="eth" m="15"></u-icon><u-icon n="vol" m="30" t="2"></u-icon><u-icon n="bell" m="27"></u-icon><u-icon n="bat" m="32" t="1"></u-icon><fit-text w="52" m="18">10:41</fit-text><i style="margin-left:18px"></i><u-icon n="lock" m="20"></u-icon><u-icon n="msg" m="31" t="-4"></u-icon>`);

def('tab-strip',`<style>:host{display:flex;height:71px;background:#1b1b1f;border-top:2px solid #27282c;box-sizing:border-box;align-items:center;font:23px "Noto Sans",sans-serif;color:#dcdcdc;margin-top:1px;box-shadow:0 -1px #15161a;position:relative;padding-bottom:1px}
.l{width:2px;height:69px;background:#46474b;margin-left:21px;flex:none}
.t{display:flex;align-items:center;width:332px;height:57px;margin-left:6px;margin-top:-1px;background:#42444b;border-radius:5px;flex:none;box-shadow:0 0 3px #000}
.f{mask-image:linear-gradient(90deg,#000 80%,transparent)}
.bg{position:absolute;left:0;bottom:0}</style>
<svg class="bg" width="180" height="22"><path d="M0 8Q35-3 72 3v19H0Z" fill="#101013"/><path d="M0 20Q30 8 70 8" fill="none" stroke="#1e1f23" stroke-width="3"/></svg>
<u-icon n="foxv" w="24" h="25" m="18" style="z-index:1"></u-icon><div class="l"></div>
<div class="t"><u-icon n="ant" m="15"></u-icon><fit-text class="f" w="252" m="11">192.168.29.11/mutillidae/in</fit-text><u-icon n="x" m="4"></u-icon></div>
<u-icon n="plus" m="23"></u-icon><u-icon n="chev" m="1254" t="-1"></u-icon><u-icon n="wdot" m="89" t="-1"></u-icon><u-icon n="wdot" m="10" t="-1"></u-icon><u-icon n="wclose" m="9" t="-1"></u-icon>`);

def('nav-bar',`<style>:host{display:flex;height:61px;padding-bottom:2px;box-sizing:border-box;align-items:center;font:23px "Noto Sans",sans-serif;color:#eee}
.u{display:flex;align-items:center;box-sizing:border-box;width:1227px;height:51px;margin:1px 0 0 163px;border:2px solid #15151a;border-radius:6px;background:#262733;flex:none}
.u span{color:#96979c}.f{mask-image:linear-gradient(90deg,#000 93%,transparent);overflow:hidden}
.z{width:59px;height:35px;border-radius:4px;background:#464953;margin-left:12px;display:flex;align-items:center;justify-content:center}</style>
<u-icon n="back" m="25"></u-icon><u-icon n="fwd" m="32"></u-icon><u-icon n="reload" m="32"></u-icon><u-icon n="home" m="30"></u-icon>
<div class="u"><u-icon n="shield" m="11"></u-icon><u-icon n="nolock" m="20"></u-icon><fit-text class="f" w="1010" m="15">192.168.29.11<span>/mutillidae/index.php?page=user-info.php&amp;username=senthil'union select 1,table_na</span></fit-text>
<div class="z"><fit-text w="38" s="18">67%</fit-text></div><u-icon n="star" m="18"></u-icon></div>
<u-icon n="pocket" m="165"></u-icon><u-icon n="puzzle" m="33"></u-icon><u-icon n="menu" m="33"></u-icon>`);

def('bookmark-bar',`<style>:host{display:flex;height:50px;padding-bottom:3px;box-sizing:border-box;align-items:center;font:22.500px "Noto Sans",sans-serif;color:#e2e2e3}</style>
<u-icon n="bkali" w="24" h="25" m="18"></u-icon><fit-text w="92" m="6">Kali Linux</fit-text><u-icon n="btools" w="22" h="25" m="19"></u-icon><fit-text w="94" m="8">Kali Tools</fit-text><u-icon n="bdocs" w="19" m="21"></u-icon><fit-text w="89" m="9">Kali Docs</fit-text><u-icon n="bforum" w="25" h="25" m="18"></u-icon><fit-text w="116" m="5">Kali Forums</fit-text><u-icon n="bnet" w="25" h="23" m="18"></u-icon><fit-text w="146" m="5">Kali NetHunter</fit-text><u-icon n="bug" w="21" m="19"></u-icon><fit-text w="107" m="8">Exploit-DB</fit-text><u-icon n="bug" w="21" m="18"></u-icon><fit-text w="189" m="8">Google Hacking DB</fit-text><u-icon n="boff" w="23" h="25" m="18"></u-icon><fit-text w="66" m="6">OffSec</fit-text>`);

def('site-sidebar',`<style>:host{display:flex;flex-direction:column;align-items:center;box-sizing:border-box;width:203px;flex:none;background:#ccccff;border-right:2px solid #222;font:bold 16.800px/20.450px "DejaVu Sans",sans-serif;color:#0a0a0a}
a{color:#00f}u{color:#00f}</style>
<u-icon n="logo" m="-8"></u-icon><div style="height:9.700px"></div>
<fit-text w="35">Site</fit-text><fit-text w="194">hacked...err...quality-</fit-text><fit-text w="183">tested with Samurai</fit-text><fit-text w="144">WTF, Backtrack,</fit-text><fit-text w="177">Firefox, Burp-Suite,</fit-text><fit-text w="161">Netcat, and <a>these</a></fit-text><fit-text w="143"><a>Mozilla Add-ons</a></fit-text>
<u-icon n="bird" style="margin-top:42px"></u-icon><fit-text w="128"><a>@webpwnized</a></fit-text>
<u-icon n="yt" style="margin-top:20px"></u-icon><fit-text w="90" style="margin-top:1px"><a>Mutillidae</a></fit-text><fit-text w="73"><a>Channel</a></fit-text>
<fit-text w="188" style="margin-top:20.500px">Developed by Adrian</fit-text><fit-text w="190">"<u>Irongeek</u>" Crenshaw</fit-text><fit-text w="157">and Jeremy Druin</fit-text>`);

def('user-record',`<style>:host{display:block;height:61.350px}div{display:flex}span{display:block;font-weight:400;color:#222}</style><div id="a"></div><div id="b"></div><div id="c"></div>`,e=>{
 const r=e.shadowRoot,f=(k,w,v)=>{const [t,x]=(v||'').split('|');return `<fit-text w="${w}">${k}=</fit-text>`+(t?`<span><fit-text w="${x}">${t}</fit-text></span>`:'');};
 r.getElementById('a').innerHTML=f('Username',104,e.getAttribute('u'));
 r.getElementById('b').innerHTML=f('Password',99,e.getAttribute('p'));
 r.getElementById('c').innerHTML=f('Signature',101,e.getAttribute('g'));
});

def('site-main',`<style>:host{display:flex;flex-direction:column;flex:1;padding:0 43px 0 43px;font:16.800px/20.450px "DejaVu Sans",sans-serif;color:#1a1a1a}
.r{display:flex;align-items:center;height:22px;margin:0 0 8px 587px;font-weight:700;color:#0a0a0a}
.in{box-sizing:border-box;width:183px;height:22px;border:1.500px solid #8f8f9d;border-radius:3px;background:#fffac6;font:14px/18px "Noto Sans",sans-serif;color:#444;flex:none;display:flex;align-items:center;padding-left:3px}
.b{box-sizing:border-box;align-self:center;width:173px;height:27px;border:2px solid #111;background:#ccccff;margin:9px 0 18px;display:flex;align-items:center;justify-content:center;font:600 14px "Noto Sans",sans-serif;color:#111}
.g{display:flex;align-self:center;font-style:italic;margin-left:-1px}.g u{color:#6b2fa0}
.bar{box-sizing:border-box;height:30px;border:2px solid #333;background:#ccc;margin:22px 0 15.600px;display:flex;align-items:center;justify-content:center;font-weight:700;color:#0a0a0a}
.l{display:flex;flex-direction:column;gap:16.850px;font-weight:700;color:#0a0a0a}
svg{display:block}</style>
<div class="r" style="margin-top:-7px"><fit-text w="52">Name</fit-text><div class="in" style="margin-left:95px"><fit-text w="40">senthil</fit-text></div></div>
<div class="r"><fit-text w="86">Password</fit-text><div class="in" style="margin-left:61px"><svg width="44" height="10"><g fill="#0a0a0a"><circle cx="4" cy="6" r="3.300"/><circle cx="13" cy="6" r="3.300"/><circle cx="21.500" cy="6" r="3.300"/><circle cx="30.500" cy="6" r="3.300"/><circle cx="39" cy="6" r="3.300"/></g></svg></div></div>
<div class="b"><fit-text w="129">View Account Details</fit-text></div>
<div class="g"><fit-text w="190">Dont have an account? </fit-text><fit-text w="161"><u>Please register here</u></fit-text></div>
<div class="bar"><fit-text w="264">Results for . 7 records found.</fit-text></div>
<div class="l"><user-record u="senthil|53" p="sk710|49" g="senthil|53"></user-record><user-record u="accounts|72"></user-record><user-record u="blogs_table|92"></user-record><user-record u="captured_data|116"></user-record><user-record u="credit_cards|98"></user-record><user-record u="hitlog|45"></user-record><user-record u="pen_test_tools|116"></user-record></div>`);

def('web-page',`<style>:host{display:flex;flex-direction:column;box-sizing:border-box;height:763px;overflow:hidden;background:#fff;padding:0 7px 0 8px}
.o{border:solid #222;border-width:0 2px 0 1px;height:763px;box-sizing:border-box}
.c{display:flex;height:745px;overflow:hidden}
.f{border-top:4px solid #000;background:#ccccff;height:40px;font:bold 16.800px/20px "DejaVu Sans",sans-serif;color:#0a0a0a;display:flex;justify-content:center}</style>
<div class="o"><div class="c"><site-sidebar></site-sidebar><site-main></site-main></div><div class="f"><fit-text w="736">Browser: Mozilla/5.0 (X11; Linux x86_64; rv:109.0) Gecko/20100101 Firefox/115.0</fit-text></div></div>`);

def('fire-fox',`<style>:host{display:block}.tb{background:#42444b;border-top:1px solid #34363b;height:112px;box-sizing:border-box;border-bottom:2px solid #1c1d22}</style>
<tab-strip></tab-strip><div class="tb"><nav-bar></nav-bar><bookmark-bar></bookmark-bar></div><web-page></web-page>`);

def('task-app',`<style>:host{display:flex;flex:none;width:51px;height:50px;box-sizing:border-box;margin-left:11px;align-items:center;justify-content:center;border-bottom:3px solid transparent;padding-top:3px}:host([on]){border-color:#6c6be8}:host([more]){border-image:linear-gradient(90deg,#6c6be8 79%,#5352b4 79%) 3}</style><slot></slot>`);

def('task-bar',`<style>:host{display:flex;height:50px;background:#101010;align-items:center;color:#f4f4f4;font:17.500px "Open Sans",sans-serif;overflow:hidden}
.s{display:flex;align-items:center;box-sizing:border-box;width:360px;height:50px;margin-left:20px;background:#3d3d3d;border:1px solid #606060;flex:none;color:#dedede}
.c{width:76px;flex:none;margin-left:15px;display:flex;flex-direction:column;align-items:center;line-height:23px;font-size:15px}
.e{width:1px;height:50px;background:#555;margin-left:25px}</style>
<u-icon n="win" m="20"></u-icon><div class="s"><u-icon n="search" m="14"></u-icon><fit-text w="164" m="15">Type here to search</fit-text><u-icon n="bowl" m="70" t="2"></u-icon></div>
<u-icon n="task" m="20"></u-icon>
<task-app on style="margin-left:29px"><u-icon n="files" m="-1"></u-icon></task-app><task-app on more><u-icon n="chrome"></u-icon></task-app><task-app on><u-icon n="wa" m="10" t="4"></u-icon></task-app><task-app><u-icon n="discord" m="-1"></u-icon></task-app><task-app><u-icon n="music" m="-1"></u-icon></task-app><task-app><u-icon n="bt" m="-2"></u-icon></task-app><task-app><u-icon n="hex" m="-2"></u-icon></task-app><task-app on style="margin-left:10px"><u-icon n="vb" m="-3"></u-icon></task-app><task-app on more><u-icon n="vm"></u-icon></task-app>
<u-icon n="moon" m="324" t="-2"></u-icon><fit-text w="37" m="12">32°C</fit-text><fit-text w="96" m="11">Mostly clear</fit-text>
<u-icon n="up" m="31"></u-icon><u-icon n="mic" m="14"></u-icon><u-icon n="wbat" m="13"></u-icon><u-icon n="net" m="10"></u-icon><u-icon n="wvol" m="10"></u-icon><fit-text w="29" m="12" s="16">ENG</fit-text>
<div class="c"><fit-text w="61">08:11 PM</fit-text><fit-text w="76">10-05-2024</fit-text></div><u-icon n="note" m="23"></u-icon><div class="e"></div>`);

def('vm-desktop',`<style>:host{display:flex;flex-direction:column;width:1920px;height:1080px;overflow:hidden}</style><title-bar></title-bar><kali-panel></kali-panel><fire-fox></fire-fox><task-bar></task-bar>`);
</script>
</body>
</html>
